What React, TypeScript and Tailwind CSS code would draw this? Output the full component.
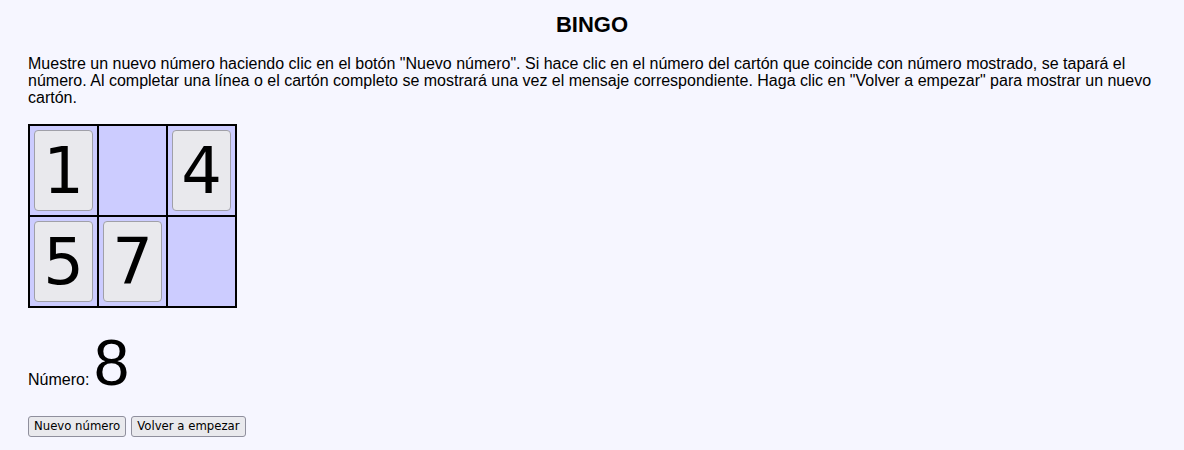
import React from "react";

// Cartón: null = casilla tapada (vacía)
const carton: (number | null)[] = [1, null, 4, 5, 7, null];

export default function App() {
  return (
    <div className="min-h-[450px] bg-[#f6f6ff] px-[28px] pt-[12px] font-['Liberation_Sans',Arial,sans-serif] text-[16px] text-black">
      <h1 className="text-center text-[22px] font-bold leading-[25px]">BINGO</h1>

      <p className="mt-[18px] leading-[17px]">
        Muestre un nuevo número haciendo clic en el botón "Nuevo número". Si hace clic en el número del
        cartón que coincide con número mostrado, se tapará el número. Al completar una línea o el cartón
        completo se mostrará una vez el mensaje correspondiente. Haga clic en "Volver a empezar" para
        mostrar un nuevo cartón.
      </p>

      {/* CARTÓN */}
      <div className="mt-[18px] grid w-fit grid-cols-[67px_67px_67px] gap-[2px] border-2 border-black bg-black">
        {carton.map((n, i) => (
          <div key={i} className="h-[89px] bg-[#ccccff] p-[4px]">
            {n !== null && (
              <button className="h-[81px] w-[59px] rounded-[4px] border border-[#a0a0a8] bg-[#e9e9ed] font-['DejaVu_Sans',sans-serif] text-[64px] leading-none text-black">
                {n}
              </button>
            )}
          </div>
        ))}
      </div>

      {/* NÚMERO ACTUAL */}
      <p className="mt-[20px] leading-[70px]">
        Número: <span className="text-[64px]">8</span>
      </p>

      <div className="mt-[1px] flex gap-[5px]">
        <button className="rounded-[3px] border border-[#8f8f9d] bg-[#e9e9ed] px-[5px] py-[2px] font-['DejaVu_Sans',sans-serif] text-[11.7px] leading-[15px]">
          Nuevo número
        </button>
        <button className="rounded-[3px] border border-[#8f8f9d] bg-[#e9e9ed] px-[5px] py-[2px] font-['DejaVu_Sans',sans-serif] text-[11.7px] leading-[15px]">
          Volver a empezar
        </button>
      </div>
    </div>
  );
}
